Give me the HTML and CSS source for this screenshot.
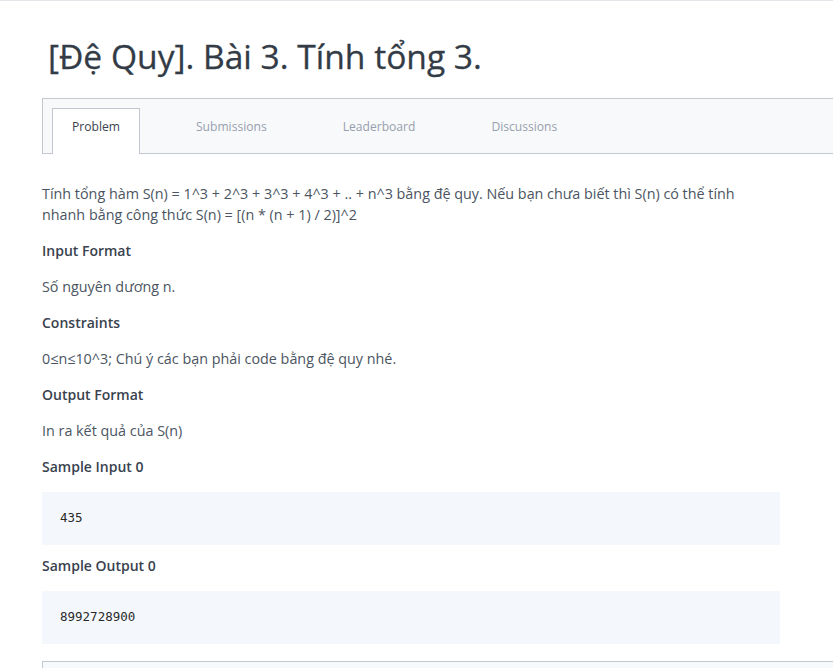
FILE: index.html
```html
<!DOCTYPE html>
<html lang="vi">
<head>
<meta charset="utf-8">
<title>[Đệ Quy]. Bài 3. Tính tổng 3.</title>
<link rel="stylesheet" href="styles.css">
</head>
<body>
<div class="page">
  <h1 class="title">[Đệ Quy]. Bài 3. Tính tổng 3.</h1>
  <nav class="tabs">
    <a class="tab active">Problem</a>
    <a class="tab">Submissions</a>
    <a class="tab">Leaderboard</a>
    <a class="tab">Discussions</a>
  </nav>
  <div class="content">
    <p class="text">Tính tổng hàm S(n) = 1^3 + 2^3 + 3^3 + 4^3 + .. + n^3 bằng đệ quy. Nếu bạn chưa biết thì S(n) có thể tính nhanh bằng công thức S(n) = [(n * (n + 1) / 2)]^2</p>
    <h3 class="heading">Input Format</h3>
    <p class="text">Số nguyên dương n.</p>
    <h3 class="heading">Constraints</h3>
    <p class="text">0≤n≤10^3; Chú ý các bạn phải code bằng đệ quy nhé.</p>
    <h3 class="heading">Output Format</h3>
    <p class="text">In ra kết quả của S(n)</p>
    <h3 class="heading">Sample Input 0</h3>
    <pre class="code">435</pre>
    <h3 class="heading">Sample Output 0</h3>
    <pre class="code">8992728900</pre>
  </div>
  <div class="bottom-box"></div>
</div>
</body>
</html>
```
FILE: styles.css
```css
html, body {
  margin: 0;
  padding: 0;
  background: #ffffff;
  overflow: hidden;
}
body {
  border-top: 1px solid #e2e5ea;
  font-family: "Open Sans", "Noto Sans", sans-serif;
  color: #39424e;
}
.page {
  padding-left: 42px;
}
.title {
  margin: 35px 0 0 6px;
  font-size: 33.6px;
  line-height: 40px;
  font-weight: 400;
  color: #323b46;
  -webkit-text-stroke: 0.3px #323b46;
}
.tabs {
  margin-top: 22px;
  width: 820px;
  height: 54px;
  box-sizing: content-box;
  border: 1px solid #c2c7d0;
  background: #f8f9fa;
  display: flex;
  align-items: flex-end;
  padding-left: 9px;
}
.tab {
  font-size: 12.1px;
  line-height: 18px;
  color: #979faf;
  padding: 9px 19px 0 19px;
  height: 36px;
  margin-right: 36px;
  margin-bottom: -1px;
  border: 1px solid transparent;
  border-bottom: none;
}
.tab.active {
  background: #ffffff;
  border-color: #c2c7d0;
  color: #39424e;
}
.content {
  width: 738px;
  margin-top: 29px;
  display: flex;
  flex-direction: column;
}
.text {
  margin: 0 0 15px 0;
  font-size: 14.35px;
  line-height: 21px;
  color: #4b5562;
}
.heading {
  margin: 0 0 15px 0;
  font-size: 14px;
  line-height: 21px;
  font-weight: 600;
  color: #39424e;
}
.code {
  margin: 0 0 10px 0;
  padding: 17px 18px 18px 18px;
  background: #f4f8fd;
  font-family: "DejaVu Sans Mono", "Liberation Mono", monospace;
  font-size: 12.5px;
  line-height: 18px;
  color: #2a2a2a;
}
.content .code:last-child {
  margin-bottom: 17px;
}
.bottom-box {
  width: 820px;
  height: 40px;
  border: 1px solid #c2c7d0;
  background: #f8f9fa;
}
```
